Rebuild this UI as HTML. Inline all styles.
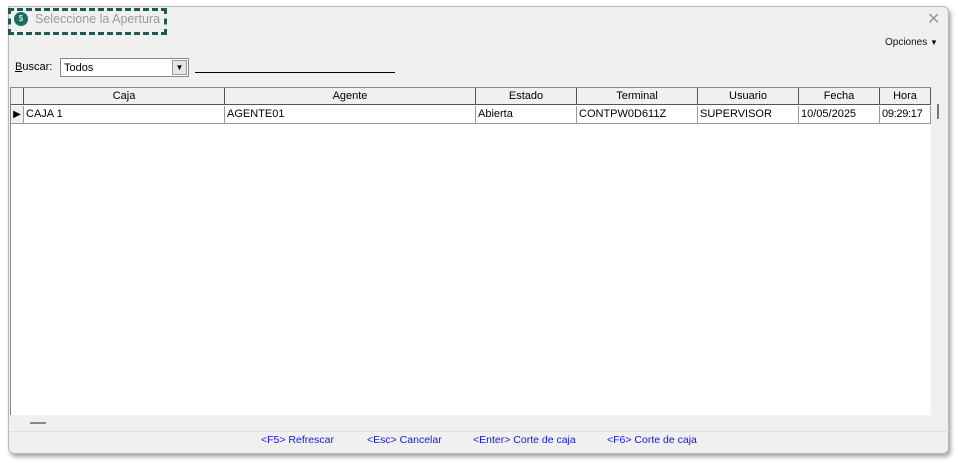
<!DOCTYPE html>
<html><head><style>
*{margin:0;padding:0;box-sizing:border-box}
body{width:959px;height:463px;background:#fff;position:relative;overflow:hidden;font-family:"Liberation Sans",sans-serif;font-size:11px;color:#000}
.a{position:absolute}
.win{left:8px;top:6px;width:941px;height:448px;background:#f0f0f0;border:1px solid #b8b8b8;border-radius:0 6px 6px 6px;box-shadow:2px 3px 4px rgba(0,0,0,.35)}
.h{position:absolute;top:88px;height:17px;background:#f0f0f0;border-right:1px solid #555;border-bottom:1px solid #555;text-align:center;line-height:16px;font-size:11px}
.c{position:absolute;top:106px;height:18px;border-right:1px solid #999;border-bottom:1px solid #999;line-height:17px;padding-left:2px;font-size:11px}
.l{color:#1515e6;font-size:10.5px}
</style></head><body>
<div class="a win"></div>
<div class="a" style="left:8px;top:8px;width:159px;height:27px;border:3px dashed #1d5a55"></div>
<div class="a" style="left:14px;top:12px;width:14px;height:14px;border-radius:50%;background:#1a6e5e;color:#fff;font-size:8px;text-align:center;line-height:14px">$</div>
<div class="a" style="left:35px;top:12px;color:#9a9a9a;font-size:12.5px">Seleccione la Apertura</div>
<div class="a" style="left:927px;top:9px;color:#999;font-size:16px">✕</div>
<div class="a" style="left:885px;top:37px;font-size:10px;color:#111">Opciones <span style="font-size:8px">▼</span></div>
<div class="a" style="left:15px;top:61px;font-size:11px"><u>B</u>uscar:</div>
<div class="a" style="left:60px;top:58px;width:129px;height:19px;background:#fff;border:1px solid #888"><span style="position:absolute;left:3px;top:3px;font-size:11px">Todos</span><div style="position:absolute;right:1px;top:1px;width:15px;height:15px;background:#e6e6e6;border:1px solid #999;font-size:8px;text-align:center;line-height:14px">▼</div></div>
<div class="a" style="left:195px;top:72px;width:200px;height:1px;background:#000"></div>
<div class="a" style="left:10px;top:87px;width:921px;height:328px;background:#fff;border-left:1px solid #888;border-top:1px solid #888"></div>
<div class="h" style="left:11px;width:13px"></div>
<div class="h" style="left:24px;width:201px">Caja</div>
<div class="h" style="left:225px;width:251px">Agente</div>
<div class="h" style="left:476px;width:101px">Estado</div>
<div class="h" style="left:577px;width:121px">Terminal</div>
<div class="h" style="left:698px;width:101px">Usuario</div>
<div class="h" style="left:799px;width:81px">Fecha</div>
<div class="h" style="left:880px;width:51px">Hora</div>
<div class="c" style="left:11px;width:13px;background:#f0f0f0;padding:0;font-size:10px;text-align:center">▶</div>
<div class="c" style="left:24px;width:201px">CAJA 1</div>
<div class="c" style="left:225px;width:251px">AGENTE01</div>
<div class="c" style="left:476px;width:101px">Abierta</div>
<div class="c" style="left:577px;width:121px">CONTPW0D611Z</div>
<div class="c" style="left:698px;width:101px">SUPERVISOR</div>
<div class="c" style="left:799px;width:81px">10/05/2025</div>
<div class="c" style="left:880px;width:51px;letter-spacing:-0.3px">09:29:17</div>
<div class="a" style="left:937px;top:104px;width:2px;height:15px;background:#777"></div>
<div class="a" style="left:30px;top:422px;width:16px;height:2px;background:#888"></div>
<div class="a" style="left:10px;top:431px;width:939px;height:1px;background:#ddd"></div>
<div class="a l" style="left:261px;top:434px">&lt;F5&gt; Refrescar</div>
<div class="a l" style="left:367px;top:434px">&lt;Esc&gt; Cancelar</div>
<div class="a l" style="left:473px;top:434px">&lt;Enter&gt; Corte de caja</div>
<div class="a l" style="left:607px;top:434px">&lt;F6&gt; Corte de caja</div>
</body></html>
